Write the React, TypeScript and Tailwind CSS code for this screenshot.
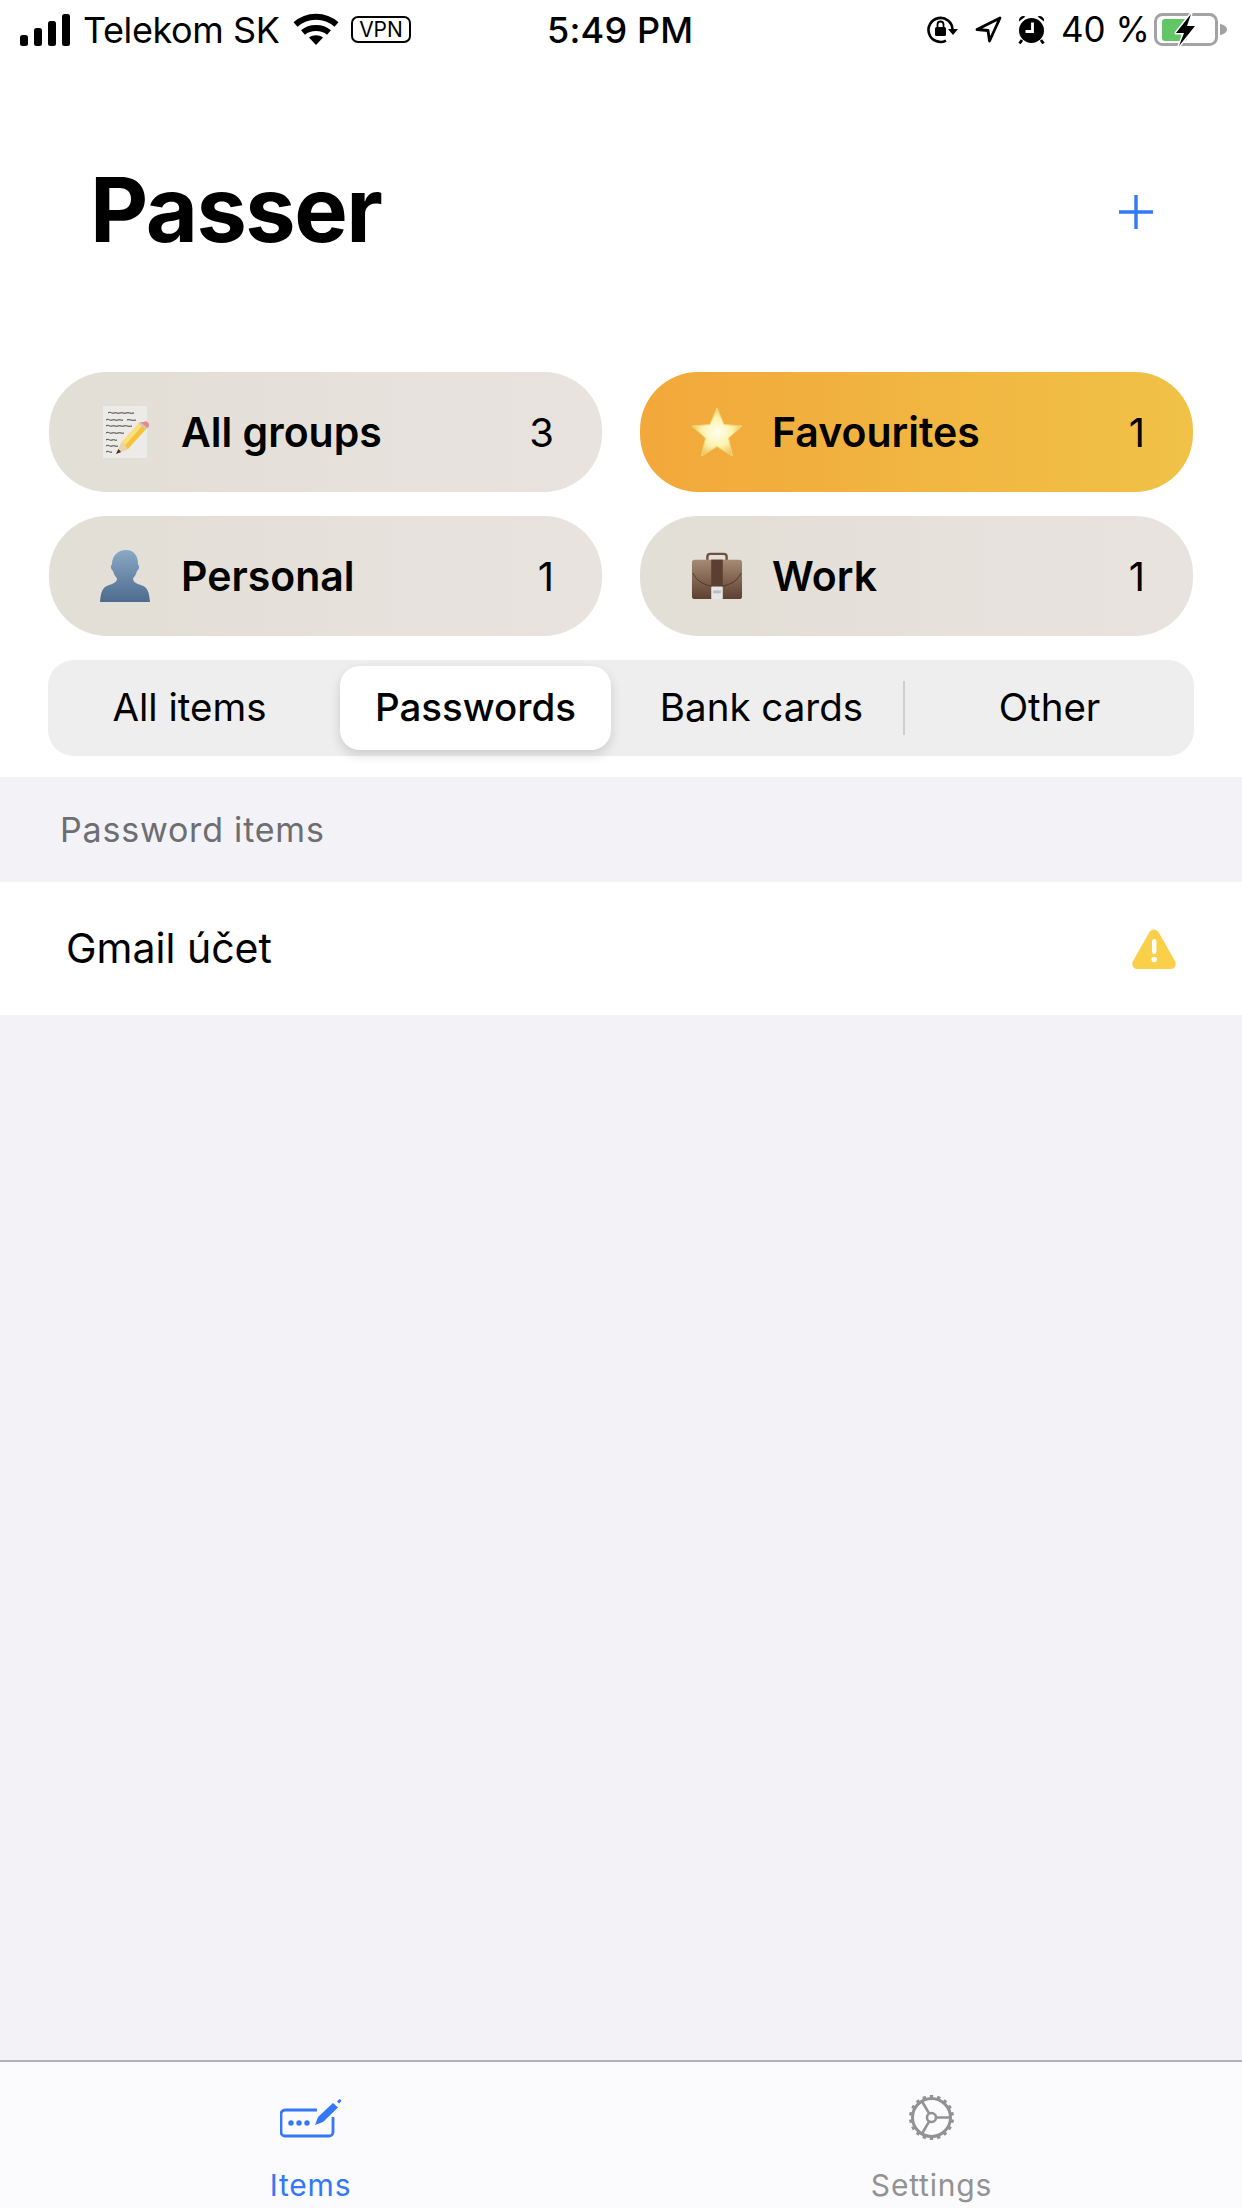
// App.tsx
const font = { fontFamily: "Inter, 'Noto Sans', sans-serif" };

function Signal() {
  return (
    <svg width="50" height="32" viewBox="0 0 50 32" fill="#000">
      <rect x="0" y="21" width="8" height="11" rx="2.5" />
      <rect x="14" y="14" width="8" height="18" rx="2.5" />
      <rect x="28" y="7" width="8" height="25" rx="2.5" />
      <rect x="42" y="0" width="8" height="32" rx="2.5" />
    </svg>
  );
}

function Wifi() {
  return (
    <svg width="46" height="33" viewBox="0 0 46 33" fill="none" stroke="#000" strokeWidth="6">
      <path d="M2.5 11.5C14 1 32 1 43.5 11.5" />
      <path d="M10 19.5C17 13.5 29 13.5 36 19.5" />
      <path d="M16 24.5L23 32L30 24.5C26 21.5 20 21.5 16 24.5Z" fill="#000" stroke="none" />
    </svg>
  );
}

function LockRotate() {
  return (
    <svg width="33" height="29" viewBox="0 0 33 29" fill="none">
      <path d="M26.5 14.5A12 12 0 1 0 20 25.6" stroke="#000" strokeWidth="2.6" />
      <path d="M22 14h10l-5 6z" fill="#000" />
      <rect x="9" y="12" width="11" height="9" rx="1.5" fill="#000" />
      <path d="M11.5 12V9.5a3 3 0 0 1 6 0V12" stroke="#000" strokeWidth="1.8" />
    </svg>
  );
}

function Location() {
  return (
    <svg width="27" height="27" viewBox="0 0 27 27" fill="none" stroke="#000" strokeWidth="2.8" strokeLinejoin="round">
      <path d="M25 2L2 13.5L13 14.5L14.5 25Z" />
    </svg>
  );
}

function Alarm() {
  return (
    <svg width="27" height="29" viewBox="0 0 27 29">
      <circle cx="13.5" cy="15.5" r="12.5" fill="#000" />
      <path d="M1 6.5a4.500 4.500 0 0 1 6.500-5zM26 6.500a4.500 4.500 0 0 0-6.500-5z" fill="#000" />
      <path d="M4 25l-2.500 3.500M23 25l2.500 3.500" stroke="#000" strokeWidth="2.800" />
      <path d="M14.500 7.500v9H7.500" fill="none" stroke="#fff" strokeWidth="2.800" />
    </svg>
  );
}

function Battery() {
  return (
    <svg width="73" height="33" viewBox="0 0 73 33" fill="none">
      <rect x="1.500" y="1.500" width="61" height="30" rx="7" stroke="#a3a3a3" strokeWidth="3" />
      <path d="M66 11c4 .5 7 3 7 5.500s-3 5-7 5.500z" fill="#a3a3a3" />
      <rect x="8" y="6" width="25" height="22" rx="3" fill="#62c566" />
      <path d="M25 33l5-13h-8L37 1l-4 12h8z" fill="#000" stroke="#fff" strokeWidth="3" paintOrder="stroke" strokeLinejoin="round" />
    </svg>
  );
}

function StatusBar() {
  return (
    <div className="flex h-[60px] items-center pb-[1px] pl-[20px] text-[36px] text-black">
      <Signal />
      <span className="ml-[13px] w-[195px] whitespace-nowrap tracking-[-0.4px]">Telekom SK</span>
      <span className="ml-[15px]"><Wifi /></span>
      <span className="ml-[12px] flex h-[27px] w-[60px] items-center justify-center rounded-[7px] border-[2.500px] border-black text-[21px] leading-none">VPN</span>
      <span className="ml-[136px] w-[145px] whitespace-nowrap font-medium tracking-[0.2px]">5:49 PM</span>
      <span className="ml-[234px]"><LockRotate /></span>
      <span className="ml-[16px]"><Location /></span>
      <span className="ml-[16px]"><Alarm /></span>
      <span className="ml-[16px] w-[86px] whitespace-nowrap text-[35px]">40 %</span>
      <span className="ml-[7px]"><Battery /></span>
    </div>
  );
}

function NoteEmoji() {
  return (
    <svg width="52" height="52" viewBox="0 0 52 52">
      <rect x="3" y="0" width="44" height="52" fill="#ecebe8" />
      <g stroke="#3f3c38" strokeWidth="1" fill="none">
        <path d="M8 7c3-2 3 1 6 0s3 1 6 0 3 1 6 0 4 1 8 0" />
        <path d="M6 14c3-2 3 1 6 0s3 1 6 0 3 1 5 0M27 14c3-1 4 1 9 0" />
        <path d="M6 20c3-2 3 1 6 0s3 1 6 0 3 1 6 0 3 1 8 0" />
        <path d="M6 27c3-2 3 1 6 0s3 1 6 0 3 1 6 0" />
        <path d="M6 34c3-2 3 1 6 0s3 1 5 0" />
        <path d="M6 40c3-2 3 1 6 0s3 1 6 0" />
        <path d="M6 46c3-2 3 1 6 0" />
      </g>
      <path d="M16 48L22 36L40 16L47 22L28 43Z" fill="#f4c23c" />
      <path d="M22 36L40 16L43 19L25 39.500Z" fill="#fbe07a" />
      <path d="M16 48L22 36L28 43Z" fill="#e9d3ad" />
      <path d="M16 48L18.500 43L21 46Z" fill="#333" />
      <path d="M40 16L44 16C46 14 50 17 49 20.500L47 22Z" fill="#e58a8a" />
      <path d="M40 16L47 22L45.500 23.500L38.500 17.500Z" fill="#c9c9c9" />
    </svg>
  );
}

function PersonEmoji() {
  return (
    <svg width="52" height="52" viewBox="0 0 52 52">
      <defs>
        <linearGradient id="bust" x1="0" y1="0" x2="0" y2="1">
          <stop offset="0" stopColor="#8aa9c6" />
          <stop offset="1" stopColor="#4c6b8e" />
        </linearGradient>
      </defs>
      <path d="M26 0c8 0 12 6 12 14 0 1 1.500 1 1 4-.5 2-1.500 2.500-2 3-1 4-3 6-4 7.500 0 4 4 5 9 7 5 2 7 5 8 16.500H0C1 40.500 3 37.500 8 35.500c5-2 9-3 9-7-1-1.500-3-3.500-4-7.500-.5-.5-1.500-1-2-3-.5-3 1-3 1-4C12 6 18 0 26 0Z" fill="url(#bust)" />
    </svg>
  );
}

function StarEmoji() {
  return (
    <svg width="52" height="50" viewBox="0 0 52 50">
      <defs>
        <radialGradient id="star" cx="0.5" cy="0.5" r="0.6">
          <stop offset="0" stopColor="#fffef0" />
          <stop offset="0.5" stopColor="#fdf3b0" />
          <stop offset="1" stopColor="#e0b543" />
        </radialGradient>
      </defs>
      <path d="M26 1L33 17.500L51 19L37.500 31L41.500 49L26 39.500L10.500 49L14.500 31L1 19L19 17.500Z" fill="url(#star)" stroke="#f3d878" strokeWidth="1" strokeLinejoin="round" />
    </svg>
  );
}

function CaseEmoji() {
  return (
    <svg width="54" height="50" viewBox="0 0 54 50">
      <defs>
        <linearGradient id="case" x1="0" y1="0" x2="0" y2="1">
          <stop offset="0" stopColor="#a58a74" />
          <stop offset="1" stopColor="#5d4030" />
        </linearGradient>
      </defs>
      <path d="M17 9V5c0-2 1-3 3-3h14c2 0 3 1 3 3v4" fill="none" stroke="#6f5140" strokeWidth="2.500" />
      <rect x="1" y="8" width="52" height="41" rx="3" fill="url(#case)" />
      <rect x="21" y="8" width="12" height="28" fill="#5c3f30" />
      <path d="M2 22c4 9 14 14 25 14s21-5 25-14" fill="none" stroke="#4e3528" strokeWidth="1" />
      <rect x="21" y="36" width="12" height="13" rx="1" fill="#e6e6e6" />
      <rect x="23" y="40" width="8" height="3" fill="#bdbdbd" />
    </svg>
  );
}

function GroupPill(props: { icon: React.ReactNode; label: string; count: number; active?: boolean }) {
  return (
    <div
      className={
        props.active
          ? "flex h-[120px] items-center rounded-[58px] bg-gradient-to-r from-[#f2a83a] to-[#f0c247] pl-[51px] pr-[48px] text-black"
          : "flex h-[120px] items-center rounded-[58px] bg-gradient-to-r from-[#e2dfd6] to-[#e9e3df] pl-[51px] pr-[48px] text-black"
      }
    >
      <span className="flex w-[52px] justify-center">{props.icon}</span>
      <span className="ml-[29px] pt-[2px] text-[41px] font-[590]">{props.label}</span>
      <span className="ml-auto pt-[1px] text-[40px]">{props.count}</span>
    </div>
  );
}

function Segments() {
  const tabs = ["All items", "Passwords", "Bank cards", "Other"];
  return (
    <div className="mx-[48px] mt-[24px] flex h-[96px] items-center gap-[15px] rounded-[26px] bg-[#eeeeee] pl-[6px] text-[38.500px] text-black">
      {tabs.map((t) =>
        t === "Passwords" ? (
          <div key={t} className="flex h-[84px] w-[271px] items-center justify-center rounded-[20px] bg-white font-medium shadow-[0_5px_12px_rgba(0,0,0,0.14)]">
            {t}
          </div>
        ) : (
          <div key={t} className={t === "Other" ? "flex h-[84px] w-[275px] items-center justify-center" : "relative flex h-[84px] w-[271px] items-center justify-center"}>
            {t}
            {t === "Bank cards" && <span className="absolute left-[277px] top-[15px] h-[54px] w-[2px] bg-[#cfcfcf]" />}
          </div>
        )
      )}
    </div>
  );
}

function Warning() {
  return (
    <svg width="44" height="40" viewBox="0 0 44 40">
      <path d="M17.500 3C19.500-.5 24.500-.5 26.500 3L43 32c2 3.500-.5 8-4.500 8h-33C1.500 40-1 35.500 1 32Z" fill="#fad04a" />
      <rect x="20" y="10" width="4.400" height="15" rx="2.200" fill="#fff" />
      <circle cx="22.200" cy="30.500" r="2.700" fill="#fff" />
    </svg>
  );
}

function ItemsIcon() {
  return (
    <svg width="62" height="40" viewBox="0 0 62 40" fill="none">
      <path d="M37 12H5a4 4 0 0 0-4 4v18a4 4 0 0 0 4 4h44a4 4 0 0 0 4-4V19" stroke="#3478f6" strokeWidth="2.800" />
      <circle cx="11" cy="25" r="2.700" fill="#3478f6" />
      <circle cx="19" cy="25" r="2.700" fill="#3478f6" />
      <circle cx="27" cy="25" r="2.700" fill="#3478f6" />
      <path d="M35 27l3-8L53 5l5 4.500L43 24Z" fill="#3478f6" />
      <path d="M57 3.500l2-2c1-1 3 1 2 2l-2 2z" fill="#3478f6" />
    </svg>
  );
}

function SettingsIcon() {
  const teeth = Array.from({ length: 18 }, (_, i) => i * 20);
  return (
    <svg width="47" height="47" viewBox="0 0 47 47" fill="none" stroke="#929292">
      <circle cx="23.500" cy="23.500" r="19" strokeWidth="3" />
      {teeth.map((a) => (
        <path key={a} d="M23.500 1v4" strokeWidth="3.400" transform={`rotate(${a} 23.500 23.500)`} />
      ))}
      <circle cx="23.500" cy="23.500" r="4.500" strokeWidth="2.600" />
      <path d="M28 23.500H42M21.200 19.600L13.500 6.500M21.200 27.400L13.500 40.500" strokeWidth="2.600" />
    </svg>
  );
}

export default function App() {
  return (
    <div className="flex h-[2208px] w-[1242px] flex-col overflow-hidden bg-white" style={font}>
      <StatusBar />

      <header className="flex h-[312px] items-center justify-between pb-[8px] pl-[90px] pr-[88px]">
        <h1 className="mb-[4px] text-[90px] font-bold leading-none tracking-[-1.500px] text-black">Passer</h1>
        <svg width="36" height="36" viewBox="0 0 36 36" stroke="#3478f6" strokeWidth="3.400">
          <path d="M18 1v34M1 18h34" />
        </svg>
      </header>

      <div className="mx-[49px] grid grid-cols-2 gap-x-[38px] gap-y-[24px]">
        <GroupPill icon={<NoteEmoji />} label="All groups" count={3} />
        <GroupPill icon={<StarEmoji />} label="Favourites" count={1} active />
        <GroupPill icon={<PersonEmoji />} label="Personal" count={1} />
        <GroupPill icon={<CaseEmoji />} label="Work" count={1} />
      </div>

      <Segments />

      <main className="mt-[21px] flex flex-1 flex-col bg-[#f2f2f7]">
        <div className="flex h-[105px] items-center pl-[60px] text-[34px] tracking-[0.8px] text-[#6d6d72]">Password items</div>
        <div className="flex h-[133px] items-center justify-between bg-white pl-[66px] pr-[66px] text-[41px] text-black">
          <span>Gmail účet</span>
          <Warning />
        </div>
      </main>

      <nav className="grid h-[148px] grid-cols-2 border-t-2 border-[#b2b2b6] bg-[#fbfbfd]">
        <div className="flex flex-col items-center pt-[36px]">
          <span className="h-[40px]"><ItemsIcon /></span>
          <span className="mt-[32px] text-[30px] leading-none tracking-[0.8px] text-[#3478f6]">Items</span>
        </div>
        <div className="flex flex-col items-center pt-[32px]">
          <span className="h-[47px]"><SettingsIcon /></span>
          <span className="mt-[29px] text-[30px] leading-none tracking-[0.8px] text-[#929292]">Settings</span>
        </div>
      </nav>
    </div>
  );
}
